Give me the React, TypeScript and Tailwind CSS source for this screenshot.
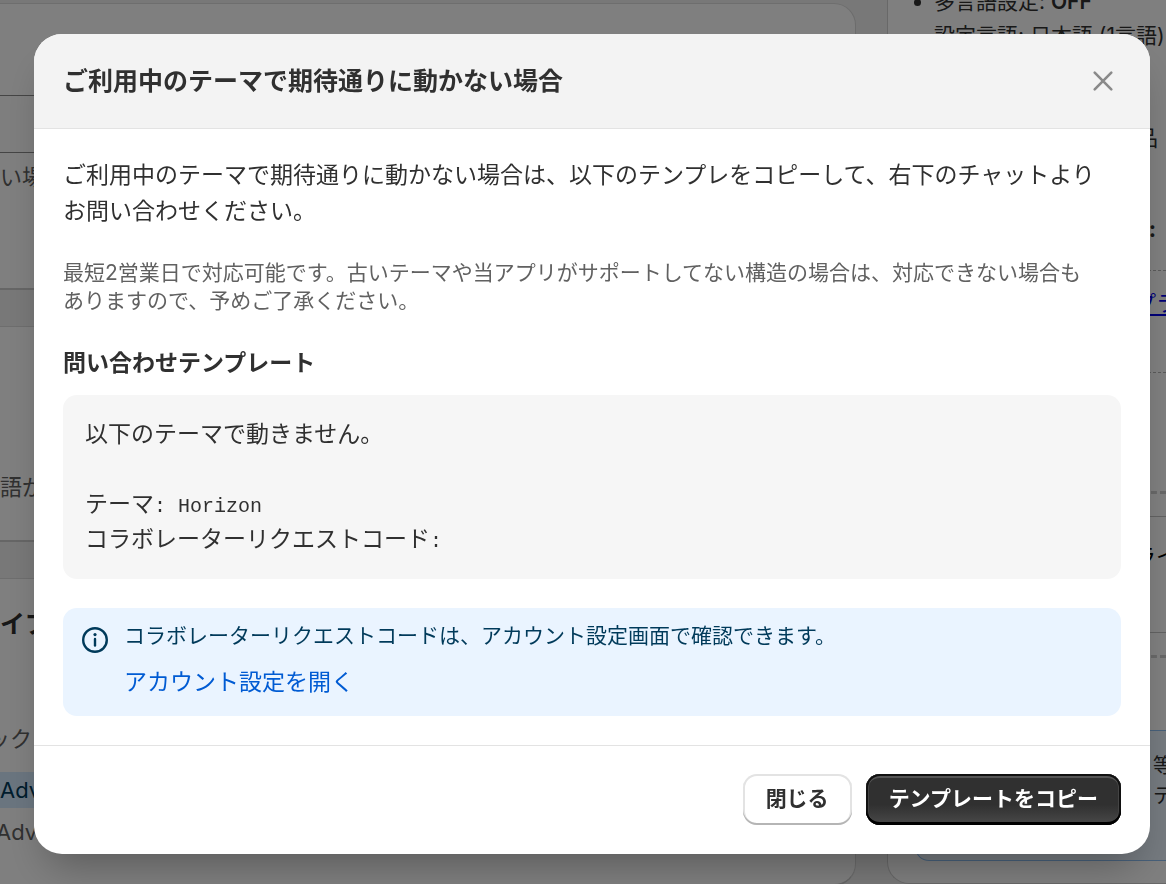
// src/App.tsx
import type { ReactNode } from "react";

export default function App() {
  return (
    <div className="font-['Inter','Noto_Sans_CJK_JP',sans-serif] text-[#303030]">
      <SettingsPage />

      {/* Backdrop + dialog */}
      <div className="fixed inset-0 overflow-hidden bg-black/50 pt-[34px] pr-4 pl-[34px]">
        <ThemeSupportDialog />
      </div>
    </div>
  );
}

function ThemeSupportDialog() {
  return (
    <section
      role="dialog"
      aria-modal="true"
      aria-labelledby="dialog-title"
      className="overflow-hidden rounded-[28px] bg-white shadow-[0_24px_40px_-14px_rgba(0,0,0,0.3)]"
    >
      <header className="flex items-center justify-between border-b border-[#e3e3e3] bg-[#f3f3f3] px-[29px] py-7">
        <h2 id="dialog-title" className="text-[25px] leading-[38px] font-bold">
          ご利用中のテーマで期待通りに動かない場合
        </h2>
        <button type="button" aria-label="閉じる" className="flex size-9 items-center justify-center text-[#8a8a8a]">
          <svg viewBox="0 0 24 24" className="size-6" fill="none" stroke="currentColor" strokeWidth="2.6" strokeLinecap="round">
            <path d="M3.7 3.7l16.6 16.6M20.3 3.7l-16.6 16.6" />
          </svg>
        </button>
      </header>

      <div className="px-[29px] pt-7 pb-[29px]">
        <p className="text-[23px] leading-9">
          ご利用中のテーマで期待通りに動かない場合は、以下のテンプレをコピーして、右下のチャットより
          <br />
          お問い合わせください。
        </p>
        <p className="mt-[30px] text-[21px] leading-7 text-[#616161]">
          最短2営業日で対応可能です。古いテーマや当アプリがサポートしてない構造の場合は、対応できない場合も
          <br />
          ありますので、予めご了承ください。
        </p>

        <h3 className="mt-[34px] text-[23px] leading-7 font-bold">問い合わせテンプレート</h3>
        <div className="mt-[18px] rounded-[14px] bg-[#f6f6f6] px-[22px] pt-6 pb-5 font-['Liberation_Mono','Noto_Sans_CJK_JP',monospace] text-[20px] leading-[35px]">
          <p>
            <Kana>以下のテーマで動きません。</Kana>
          </p>
          <p className="mt-[35px]">
            <Kana>テーマ</Kana>: Horizon
          </p>
          <p>
            <Kana>コラボレーターリクエストコード</Kana>:
          </p>
        </div>

        {/* Info banner */}
        <div className="mt-[29px] flex gap-[15px] rounded-[14px] bg-[#eaf4ff] pt-3.5 pr-4 pb-4 pl-[18px]">
          <svg viewBox="0 0 28 28" className="mt-1 size-7 shrink-0 text-[#003a5a]" fill="none" stroke="currentColor" strokeWidth="2.4" strokeLinecap="round">
            <circle cx="14" cy="14" r="11.8" />
            <path d="M14 13v6.5" />
            <circle cx="14" cy="8.6" r="1.6" fill="currentColor" stroke="none" />
          </svg>
          <div>
            <p className="text-[21px] leading-7 text-[#003a5a]">
              コラボレーターリクエストコードは、アカウント設定画面で確認できます。
            </p>
            <p className="mt-3.5 text-[23px] leading-9">
              <a href="#account" className="text-[#005bd3]">
                アカウント設定を開く
              </a>
            </p>
          </div>
        </div>
      </div>

      <footer className="flex justify-end gap-3.5 border-t border-[#e3e3e3] px-[29px] pt-7 pb-[29px]">
        <button
          type="button"
          className="rounded-[14px] bg-white px-[23px] pt-[7px] pb-[9px] text-[21px] leading-[35px] font-semibold shadow-[inset_0_-2px_0_#b5b5b5,inset_0_0_0_2px_#e3e3e3]"
        >
          閉じる
        </button>
        <button
          type="button"
          className="rounded-[14px] bg-linear-to-b from-[#303030] from-60% to-[#4a4a4a] px-[23px] pt-[7px] pb-[9px] text-[21px] leading-[35px] font-semibold text-white shadow-[inset_0_-3px_0_#000,inset_0_0_0_2px_#111,inset_0_4px_0_#555,inset_0_0_0_3px_#444]"
        >
          テンプレートをコピー
        </button>
      </footer>
    </section>
  );
}

function Kana({ children }: { children: ReactNode }) {
  return <span className="text-[23px]">{children}</span>;
}

/* Page behind the dialog */
function SettingsPage() {
  return (
    <div className="flex h-screen gap-[31px] overflow-hidden bg-[#f1f1f1] text-[22px] whitespace-nowrap">
      <div className="min-w-0 flex-1 pt-[3px] text-[#616161]">
        <Card className="rounded-tr-[22px] pt-[91px] pb-[94px]">
          <div className="mr-8 h-[58px] border-y border-[#8a8a8a] bg-[#fdfdfd]" />
          <p className="mt-2 leading-[33px]">い場</p>
        </Card>
        <Card className="mt-9 pt-36 pb-[37px]">
          <p className="leading-8">語が</p>
        </Card>
        <Card className="mt-9 rounded-br-[22px] pt-[29px] pb-[34px]">
          <h3 className="text-[25px] leading-8 font-bold text-[#303030]">イプ</h3>
          <p className="mt-[83px] -ml-3 leading-8">ック</p>
          <p className="mt-[17px] mr-8 bg-[#d5ebff] leading-9 text-[#003a5a]">Adv</p>
          <p className="mt-1.5 -ml-1 leading-9">Adv</p>
        </Card>
      </div>

      <aside className="-mt-[15px] w-[279px] shrink-0 self-start overflow-hidden rounded-bl-[22px] border-b border-l border-[#d0d0d0] bg-white">
        <ul className="list-disc pl-[46px] text-[21px] leading-[34px]">
          <li>
            多言語設定: <b className="font-semibold">OFF</b>
            <br />
            設定言語: 日本語 (1言語)
          </li>
        </ul>
        <p className="mt-[68px] pr-2 text-right leading-[34px]">品</p>
        <p className="mt-[57px] pr-2.5 text-right leading-[34px] font-bold">:</p>

        <div className="mt-6 border-y border-dashed border-[#b5b5b5] pt-[15px] pb-[52px] pl-[246px] leading-[34px]">
          <a href="#plan" className="text-[#0000ee] underline decoration-2 underline-offset-3">
            プラ
          </a>
        </div>
        <hr className="mt-[118px] border-t-3 border-dashed border-[#d0d0d0]" />
        <div className="mt-[22px] border-y border-[#c4c4c4] py-[22px] pl-[246px] leading-[34px] text-black">
          <p className="pb-[37px]">ライ</p>
        </div>
        <hr className="mt-[22px] border-t-3 border-dashed border-[#d0d0d0]" />

        <div className="mt-[72px] mb-[22px] ml-[27px] rounded-l-[14px] border border-r-0 border-[#8fc1f5] bg-[#eaf4ff] pt-5 pb-[49px] text-[20px] leading-[30px]">
          <p className="pl-[237px]">等</p>
          <p className="pl-[237px]">テ</p>
        </div>
      </aside>
    </div>
  );
}

function Card({ className, children }: { className: string; children: ReactNode }) {
  return (
    <div className={`border-t border-r border-b-2 border-t-[#dcdcdc] border-r-[#d8d8d8] border-b-[#cccccc] bg-white ${className}`}>
      {children}
    </div>
  );
}
